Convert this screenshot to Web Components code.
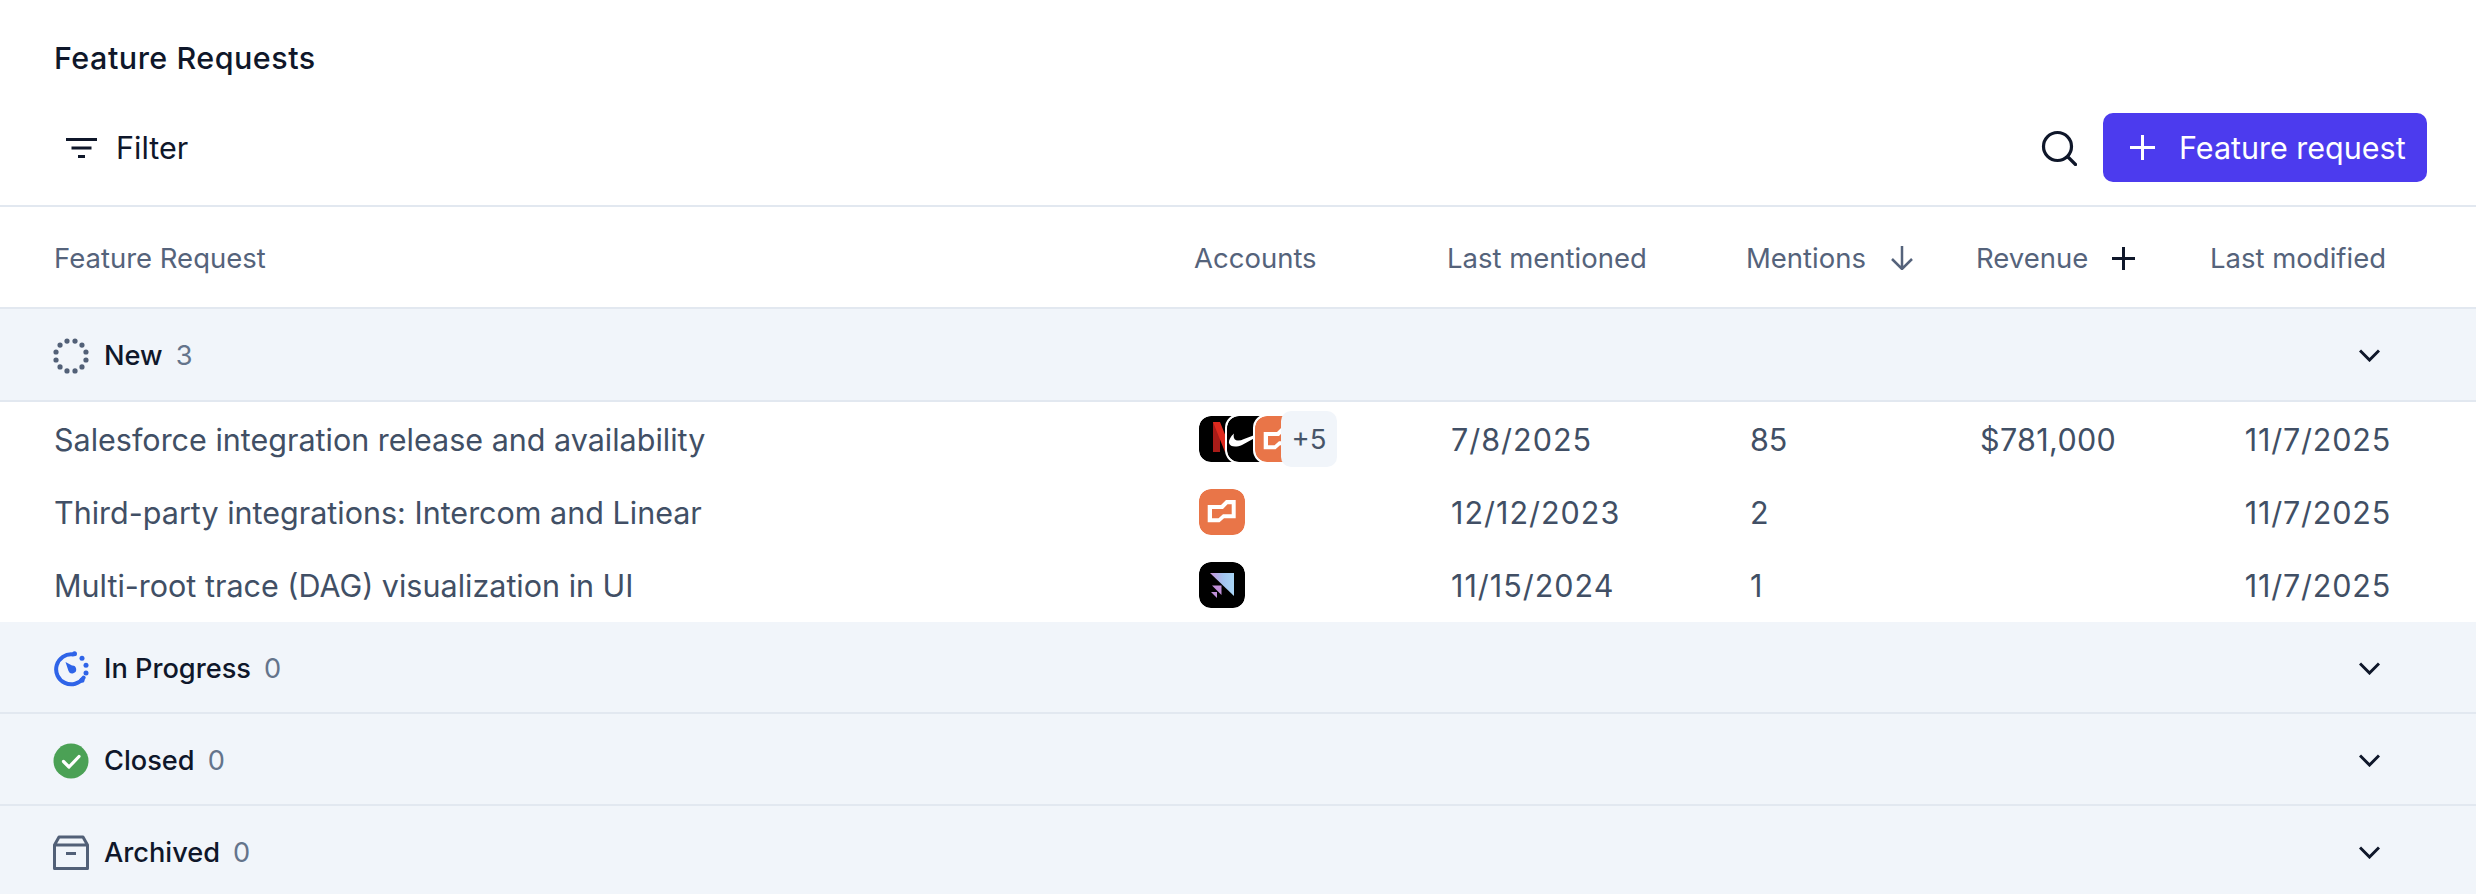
<!DOCTYPE html>
<html>
<head>
<meta charset="utf-8">
<title>Feature Requests</title>
<style>
	html, body { margin: 0; background: #fff; }
	body { font-family: Inter, "Liberation Sans", sans-serif; color: #0f172a; height: 894px; overflow: hidden; }
</style>
</head>
<body>
<fr-page>
	<fr-toolbar title-text="Feature Requests"></fr-toolbar>
	<fr-head></fr-head>
	<fr-group icon="new" label="New" count="3" class="first"></fr-group>
	<fr-row name="Salesforce integration release and availability" mentioned="7/8/2025" mentions="85" revenue="$781,000" modified="11/7/2025">
		<fr-logos names="netflix nike rust" more="+5"></fr-logos>
	</fr-row>
	<fr-row name="Third-party integrations: Intercom and Linear" mentioned="12/12/2023" mentions="2" modified="11/7/2025">
		<fr-logos names="rust"></fr-logos>
	</fr-row>
	<fr-row name="Multi-root trace (DAG) visualization in UI" mentioned="11/15/2024" mentions="1" modified="11/7/2025">
		<fr-logos names="trace"></fr-logos>
	</fr-row>
	<fr-group icon="progress" label="In Progress" count="0"></fr-group>
	<fr-group icon="closed" label="Closed" count="0"></fr-group>
	<fr-group icon="archived" label="Archived" count="0"></fr-group>
</fr-page>

<script>
const COLS = "1140px 253px 299px 230px 234px 1fr"

// little helper so each class only has to write its template once
function shadow(el, html) {
	el.attachShadow({ mode: "open" }).innerHTML = html
}

class FrPage extends HTMLElement {
	connectedCallback() {
		shadow(this, `
		<style>
			:host { display: flex; flex-direction: column; }
		</style>
		<slot></slot>`)
	}
}

class FrToolbar extends HTMLElement {
	connectedCallback() {
		const title = this.getAttribute("title-text") || ""
		shadow(this, `
		<style>
			:host { display: block; border-bottom: 2px solid #e2e8f0; height: 205px; }
			h1 { margin: 0; padding: 40px 0 0 54px; font-size: 30.500px; line-height: 36px; font-weight: 450; letter-spacing: .5px; }
			.bar { display: flex; align-items: center; height: 69px; margin-top: 37px; padding: 0 49px 0 66px; }
			.filter { display: flex; align-items: center; gap: 19px; font-size: 30.500px; flex: 1; }
			.filter svg { display: block; }
			.search { display: block; margin-right: 26px; }
			button {
				display: flex; align-items: center; gap: 24px;
				height: 69px; width: 324px; padding: 0 0 0 27px; box-sizing: border-box;
				border: 0; border-radius: 10px; background: #4c3bee; color: #fff;
				font: 400 30.500px Inter, "Liberation Sans", sans-serif;
				white-space: nowrap;
			}
		</style>
		<h1>${title}</h1>
		<div class="bar">
			<div class="filter">
				<svg width="31" height="22" viewBox="0 0 31 22" fill="none" stroke="#0f172a" stroke-width="3"><path d="M0 2.500h31M5.500 11h20M12 19.500h7"/></svg>
				<span>Filter</span>
			</div>
			<svg class="search" width="36" height="36" viewBox="0 0 36 36" fill="none" stroke="#0f172a" stroke-width="3.200" stroke-linecap="round"><circle cx="16.500" cy="16.500" r="14"/><path d="M27 27l7.500 7.500"/></svg>
			<button>
				<svg width="25" height="25" viewBox="0 0 25 25" fill="none" stroke="#fff" stroke-width="3"><path d="M12.500 0v25M0 12.500h25"/></svg>
				<span>Feature request</span>
			</button>
		</div>`)
	}
}

class FrHead extends HTMLElement {
	connectedCallback() {
		shadow(this, `
		<style>
			:host { display: grid; grid-template-columns: ${COLS}; align-items: center; height: 102px; padding: 2px 0 0 54px; font-size: 27.500px; color: #55637b; box-sizing: border-box; border-bottom: 2px solid #e2e8f0; }
			div { display: flex; align-items: center; white-space: nowrap; }
			svg { display: block; }
		</style>
		<div>Feature Request</div>
		<div>Accounts</div>
		<div>Last mentioned</div>
		<div>Mentions
			<svg style="margin-left:24px" width="24" height="24" viewBox="0 0 24 24" fill="none" stroke="#55637b" stroke-width="2.500"><path d="M12 0v23M2 13l10 10 10-10"/></svg>
		</div>
		<div>Revenue
			<svg style="margin-left:24px" width="23" height="23" viewBox="0 0 23 23" fill="none" stroke="#0f172a" stroke-width="3"><path d="M11.500 0v23M0 11.500h23"/></svg>
		</div>
		<div>Last modified</div>`)
	}
}

const STATUS_ICONS = {
	new: () => {
		let dots = ""
		for (let i = 0; i < 12; i++) {
			const a = (i + .5) * Math.PI / 6
			dots += `<circle cx="${(18 + 15.500 * Math.cos(a)).toFixed(2)}" cy="${(18 + 15.500 * Math.sin(a)).toFixed(2)}" r="2.600" fill="#526077"/>`
		}
		return dots
	},
	progress: () => `
		<path d="M21 3.600A15 15 0 1 0 30 27.500" fill="none" stroke="#2f64e8" stroke-width="4" stroke-linecap="round" transform="rotate(-4 18 18)"/>
		<circle cx="21.500" cy="2.800" r="2.500" fill="#2f64e8"/>
		<circle cx="29" cy="7.300" r="2.500" fill="#2f64e8"/>
		<circle cx="33" cy="14.300" r="2.500" fill="#2f64e8"/>
		<circle cx="33" cy="22" r="2.500" fill="#2f64e8"/>
		<circle cx="29" cy="29.300" r="2.500" fill="#2f64e8"/>
		<path d="M12.500 11l6.500 3.500a4 4 0 1 1-3.500 5.500z" fill="#2f64e8"/>`,
	closed: () => `
		<circle cx="18" cy="18" r="17.500" fill="#4ba155"/>
		<path d="M10.500 18.500l5.500 5.500 10-10.500" fill="none" stroke="#fff" stroke-width="3.200" stroke-linecap="round" stroke-linejoin="round"/>`,
	archived: () => `
		<path d="M6 2h24l4.500 8v23.500h-33V10zM1.500 10h33" fill="none" stroke="#526077" stroke-width="3" stroke-linejoin="round"/>
		<path d="M13 18.500h10" stroke="#526077" stroke-width="3"/>`
}

class FrGroup extends HTMLElement {
	connectedCallback() {
		const icon = this.getAttribute("icon")
		const label = this.getAttribute("label")
		const count = this.getAttribute("count")
		shadow(this, `
		<style>
			:host { display: flex; align-items: center; flex: none; box-sizing: border-box; height: 92px; padding: 4px 96px 0 53px; background: #f1f5fa; border-bottom: 2px solid #e2e8f0; }
			:host(.first) { height: 93px; padding-top: 2px; }
			svg { display: block; flex: none; }
			.label { margin-left: 15px; font-size: 27.200px; font-weight: 450; }
			.count { margin-left: 13px; font-size: 27.200px; color: #64748b; flex: 1; }
		</style>
		<svg width="36" height="36" viewBox="0 0 36 36">${STATUS_ICONS[icon]()}</svg>
		<span class="label">${label}</span>
		<span class="count">${count}</span>
		<svg width="21" height="13" viewBox="0 0 21 13" fill="none" stroke="#0f172a" stroke-width="3"><path d="M1 1.500l9.500 9.500 9.500-9.500"/></svg>`)
	}
}

class FrRow extends HTMLElement {
	connectedCallback() {
		const a = n => this.getAttribute(n) || ""
		shadow(this, `
		<style>
			:host { display: grid; grid-template-columns: ${COLS}; align-items: center; height: 73.330px; padding-left: 54px; font-size: 30.500px; color: #414f65; background: #fff; }
			.logos { padding-left: 5px; height: 56px; display: flex; align-items: center; }
			.cell { padding-left: 4px; white-space: nowrap; padding-top: 1px; }
			.name { padding-top: 1px; }
			.date { letter-spacing: 1px; }
			.money { letter-spacing: .35px; }
			.mod { text-align: right; padding: 1px 85px 0 0; letter-spacing: .8px; }
		</style>
		<div class="name">${a("name")}</div>
		<div class="logos"><slot></slot></div>
		<div class="cell date">${a("mentioned")}</div>
		<div class="cell">${a("mentions")}</div>
		<div class="cell money">${a("revenue")}</div>
		<div class="mod">${a("modified")}</div>`)
	}
}

const LOGOS = {
	netflix: `<rect width="46" height="46" fill="#000"/><path d="M14 6h7v30h-7z" fill="#a81c18"/><path d="M14 6h7l12 30h-7z" fill="#dd2a1e"/>`,
	nike: `<rect width="46" height="46" fill="#000"/><path d="M46 12L15 29C9 31.500 3 31 2 27C1.500 25 3 21 7 17.500C6 21 7 24.500 11 24.500C13 24.500 15 24 17 23z" fill="#fff"/>`,
	rust: `<rect width="46" height="46" fill="#e97548"/><path fill-rule="evenodd" d="M8.700 16H22L27 11H36.700V29.300H25L20.500 33.300H8.700zM13 20V29.300H19.500L24 25.300H32.700V15.300H28.500L24 20z" fill="#fff"/>`,
	trace: `<rect width="46" height="46" fill="#000"/><defs><linearGradient id="g" x1="0" y1="0" x2="1" y2="0"><stop offset="0" stop-color="#c893d8"/><stop offset=".55" stop-color="#a3c4f0"/><stop offset="1" stop-color="#a9d6f5"/></linearGradient></defs><path d="M11 11H35V34z" fill="url(#g)"/><path d="M13 23.500H22.500V33z" fill="#c08fd8"/><path d="M12 30H18V36z" fill="#c08fd8"/>`
}

class FrLogos extends HTMLElement {
	connectedCallback() {
		const names = (this.getAttribute("names") || "").split(" ")
		const more = this.getAttribute("more")
		let html = ""
		names.forEach((n, i) => {
			html += `<span class="logo" style="z-index:${i}"><svg width="46" height="46" viewBox="0 0 46 46">${LOGOS[n]}</svg></span>`
		})
		if (more) html += `<span class="more">${more}</span>`
		shadow(this, `
		<style>
			:host { display: flex; align-items: center; margin-left: -2px; }
			.logo { position: relative; display: block; flex: none; box-sizing: border-box; width: 50px; height: 50px; border: 2px solid #fff; border-radius: 14px; overflow: hidden; background: #fff; }
			.logo + .logo { margin-left: -22px; }
			.logo svg { display: block; border-radius: 12px; }
			.more { position: relative; z-index: 9; display: flex; align-items: center; justify-content: center; flex: none; width: 56px; height: 56px; margin-left: -22px; border-radius: 10px; background: #f1f5fa; font-size: 27.500px; color: #475569; }
		</style>
		${html}`)
	}
}

customElements.define("fr-page", FrPage)
customElements.define("fr-toolbar", FrToolbar)
customElements.define("fr-head", FrHead)
customElements.define("fr-group", FrGroup)
customElements.define("fr-row", FrRow)
customElements.define("fr-logos", FrLogos)
</script>
</body>
</html>
